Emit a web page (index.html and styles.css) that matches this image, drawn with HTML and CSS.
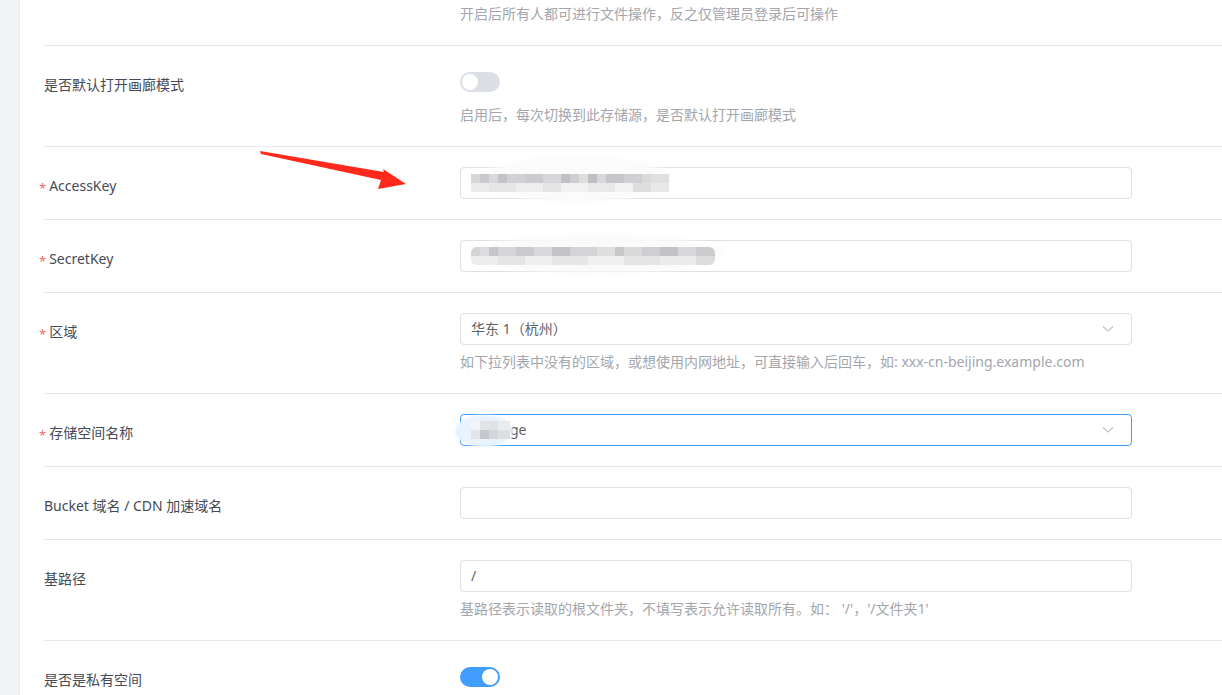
FILE: index.html
```html
<!DOCTYPE html>
<html lang="zh-CN">
<head>
    <meta charset="UTF-8">
    <meta name="viewport" content="width=device-width, initial-scale=1.0">
    <title>存储源设置</title>
    <link rel="stylesheet" href="styles.css">
</head>
<body>
    <div class="layout">
        <!-- 左侧菜单（收起） -->
        <aside class="side"></aside>

        <main class="content">
            <form class="storage-form">
                <!-- 已滚出可视区域的一项 -->
                <div class="form-item">
                    <label class="item-label"></label>
                    <div class="item-control">
                        <div class="control-line">
                            <span class="switch is-on"><span class="knob"></span></span>
                        </div>
                        <div class="item-tip">开启后所有人都可进行文件操作，反之仅管理员登录后可操作</div>
                    </div>
                </div>

                <div class="form-item">
                    <label class="item-label">是否默认打开画廊模式</label>
                    <div class="item-control">
                        <div class="control-line">
                            <span class="switch"><span class="knob"></span></span>
                        </div>
                        <div class="item-tip">启用后，每次切换到此存储源，是否默认打开画廊模式</div>
                    </div>
                </div>

                <div class="form-item">
                    <label class="item-label required">AccessKey</label>
                    <div class="item-control">
                        <div class="input">
                            <span class="smudge smudge-access"></span>
                            <span class="mosaic mosaic-access"></span>
                        </div>
                    </div>
                </div>

                <div class="form-item">
                    <label class="item-label required">SecretKey</label>
                    <div class="item-control">
                        <div class="input">
                            <span class="smudge smudge-secret"></span>
                            <span class="mosaic mosaic-secret"></span>
                        </div>
                    </div>
                </div>

                <div class="form-item">
                    <label class="item-label required">区域</label>
                    <div class="item-control">
                        <div class="input select">
                            <span class="input-value">华东 1（杭州）</span>
                            <svg class="chevron" width="12" height="8" viewBox="0 0 12 8">
                                <path d="M1 1.5 L6 6 L11 1.5" fill="none" stroke="#c0c4cc" stroke-width="1.2"/>
                            </svg>
                        </div>
                        <div class="item-tip">如下拉列表中没有的区域，或想使用内网地址，可直接输入后回车，如: xxx-cn-beijing.example.com</div>
                    </div>
                </div>

                <div class="form-item">
                    <label class="item-label required">存储空间名称</label>
                    <div class="item-control">
                        <div class="input select is-focus">
                            <span class="smudge smudge-bucket"></span>
                            <span class="mosaic mosaic-bucket"></span>
                            <span class="input-value">ge</span>
                            <svg class="chevron" width="12" height="8" viewBox="0 0 12 8">
                                <path d="M1 1.5 L6 6 L11 1.5" fill="none" stroke="#c0c4cc" stroke-width="1.2"/>
                            </svg>
                        </div>
                    </div>
                </div>

                <div class="form-item">
                    <label class="item-label">Bucket 域名 / CDN 加速域名</label>
                    <div class="item-control">
                        <div class="input"></div>
                    </div>
                </div>

                <div class="form-item">
                    <label class="item-label">基路径</label>
                    <div class="item-control">
                        <div class="input"><span class="input-value">/</span></div>
                        <div class="item-tip">基路径表示读取的根文件夹，不填写表示允许读取所有。如：&nbsp;'/'，'/文件夹1'</div>
                    </div>
                </div>

                <div class="form-item">
                    <label class="item-label">是否是私有空间</label>
                    <div class="item-control">
                        <div class="control-line">
                            <span class="switch is-on"><span class="knob"></span></span>
                        </div>
                    </div>
                </div>
            </form>
        </main>

        <!-- 标注箭头 -->
        <svg class="annotation" width="1222" height="695" viewBox="0 0 1222 695">
            <path d="M260 151 L384 172 L383 169 L406 184 L378 189 L381 180 L261 154 Z" fill="#ff2a1c"/>
        </svg>
    </div>
</body>
</html>
```

FILE: styles.css
```css
* {
    box-sizing: border-box;
    margin: 0;
    padding: 0;
}

html, body {
    height: 100%;
    overflow: hidden;
}

body {
    font-family: 'Noto Sans', 'Noto Sans CJK SC', sans-serif;
    font-size: 14px;
    background: #fff;
    color: #454a54;
}

.layout {
    position: relative;
    display: flex;
    height: 695px;
}

.side {
    width: 20px;
    flex-shrink: 0;
    background: #f2f3f5;
    border-right: 1px solid #e9eaed;
}

.content {
    flex: 1;
    padding-left: 24px;
}

/* 表单 */
.storage-form {
    margin-top: -55px;
}

.form-item {
    display: flex;
    padding: 20px 0;
    border-top: 1px solid #e6e8eb;
}

.form-item:first-child {
    border-top: none;
}

.item-label {
    width: 416px;
    flex-shrink: 0;
    line-height: 20px;
    padding-top: 9px;
    color: #454a54;
}

.item-label.required::before {
    content: '*';
    color: #f56c6c;
    margin-left: -5px;
    margin-right: 3px;
    font-size: 13px;
    vertical-align: -2px;
}

.item-control {
    width: 672px;
}

.control-line {
    height: 32px;
    display: flex;
    align-items: center;
}

.item-tip {
    padding-top: 6px;
    line-height: 22px;
    color: #a3a6ad;
}

/* 输入框 */
.input {
    position: relative;
    height: 32px;
    display: flex;
    align-items: center;
    padding: 0 10px;
    border: 1px solid #dcdfe6;
    border-radius: 4px;
    background: #fff;
    color: #606266;
}

.input.is-focus {
    border-color: #409eff;
}

.input-value {
    line-height: 30px;
}

.select .chevron {
    margin-left: auto;
    margin-right: 7px;
}

/* 打码区域 */
.mosaic {
    position: relative;
    display: block;
    height: 18px;
    background-repeat: no-repeat;
    background-size: 100% 9px;
    background-position: top, bottom;
}

.mosaic-access {
    width: 198px;
    background-image:
        linear-gradient(90deg, #d6d6d8 0 9px, #c9c9cb 9px 18px, #d9d9db 18px 27px, #c4c4c6 27px 36px, #d2d2d4 36px 54px, #cbcbcd 54px 72px, #d7d7d9 72px 90px, #c0c0c2 90px 99px, #cfcfd1 99px 108px, #dededf 108px 117px, #bfbfc1 117px 126px, #d8d8da 126px 135px, #c6c6c8 135px 153px, #d0d0d2 153px 171px, #dadadb 171px 180px, #e0e0e1 180px 198px),
        linear-gradient(90deg, #ececed 0 18px, #e6e6e7 18px 45px, #eeeeef 45px 72px, #e4e4e5 72px 90px, #f1f1f2 90px 117px, #e9e9ea 117px 144px, #f3f3f4 144px 162px, #dedee0 162px 180px, #e8e8e9 180px 198px);
}

.mosaic-secret {
    width: 244px;
    border-radius: 6px;
    background-image:
        linear-gradient(90deg, #d3d3d5 0 9px, #dcdcde 9px 18px, #c6c6c8 18px 27px, #d6d6d8 27px 45px, #cacacc 45px 63px, #d9d9db 63px 81px, #c4c4c6 81px 99px, #d4d4d6 99px 126px, #dfdfe0 126px 144px, #c8c8ca 144px 153px, #dadadb 153px 171px, #cfcfd1 171px 189px, #c3c3c5 189px 207px, #d8d8da 207px 225px, #cdcdcf 225px 244px),
        linear-gradient(90deg, #ededee 0 27px, #e5e5e6 27px 54px, #efeff0 54px 81px, #e7e7e8 81px 117px, #f0f0f1 117px 153px, #e4e4e5 153px 189px, #ececed 189px 225px, #dcdcde 225px 244px);
}

.mosaic-bucket {
    width: 39px;
    height: 18px;
    background-image:
        linear-gradient(90deg, #f2f4f7 0 9px, #e1e3e6 9px 18px, #dfe1e4 18px 27px, #eaedf0 27px 39px),
        linear-gradient(90deg, #e2e4e7 0 9px, #c5c7ca 9px 18px, #d3d5d8 18px 27px, #dcdee1 27px 39px);
}

.smudge {
    position: absolute;
    border-radius: 50%;
    filter: blur(3px);
}

.smudge-access {
    left: 20px;
    top: -12px;
    width: 190px;
    height: 46px;
    background: #fbfbfb;
}

.smudge-secret {
    left: 12px;
    top: -6px;
    width: 250px;
    height: 38px;
    background: #fafafa;
}

.smudge-bucket {
    left: -6px;
    top: 0;
    width: 58px;
    height: 32px;
    background: #e9f3fd;
    filter: blur(1px);
}

/* 开关 */
.switch {
    display: flex;
    align-items: center;
    width: 40px;
    height: 20px;
    padding: 2px;
    border-radius: 10px;
    background: #dcdfe6;
}

.switch.is-on {
    justify-content: flex-end;
    background: #409eff;
}

.knob {
    width: 16px;
    height: 16px;
    border-radius: 50%;
    background: #fff;
}

/* 标注 */
.annotation {
    position: absolute;
    left: 0;
    top: 0;
    pointer-events: none;
}
```
